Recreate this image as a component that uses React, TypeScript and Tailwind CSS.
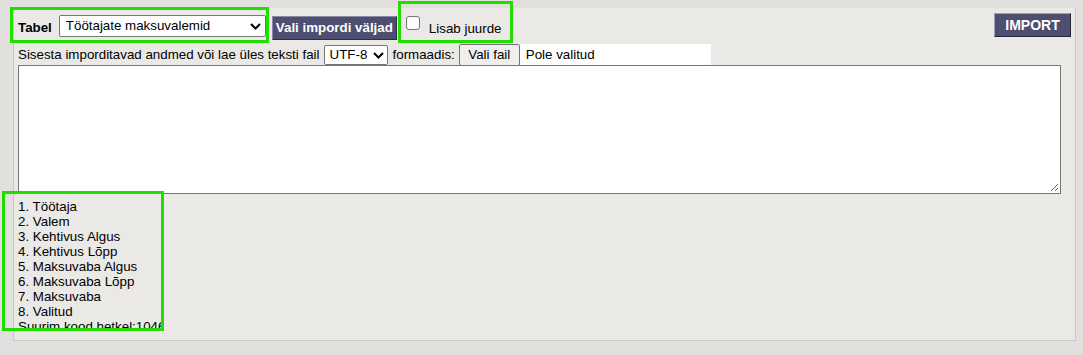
import React from 'react';

const fields = [
  '1. Töötaja',
  '2. Valem',
  '3. Kehtivus Algus',
  '4. Kehtivus Lõpp',
  '5. Maksuvaba Algus',
  '6. Maksuvaba Lõpp',
  '7. Maksuvaba',
  '8. Valitud',
  'Suurim kood hetkel:1046',
];

const Chevron: React.FC = () => (
  <svg className="w-[11px] h-[7px]" viewBox="0 0 11 7" fill="none" stroke="#000" strokeWidth={2}>
    <path d="M1 1l4.5 4.5L10 1" />
  </svg>
);

const App: React.FC = () => {
  return (
    <div className="relative w-[1083px] h-[355px] bg-[#e1e0de] font-['Liberation_Sans',Arial,sans-serif] text-[13.33px] text-black overflow-hidden">
      {/* Main panel */}
      <div className="absolute left-[13px] top-[8px] w-[1063px] h-[333px] bg-[#ebe9e6] border-l border-r border-b border-[#c9c8c6] pl-[4px]">
        {/* Top row */}
        <div className="flex items-start h-[36px]">
          <span className="font-bold mt-[12px] mr-[7px] leading-[15px]">Tabel</span>
          <div className="mt-[7px] flex items-center justify-between w-[207px] h-[22px] bg-white border border-[#767676] rounded-[2px] pl-[6px] pr-[4px]">
            <span>Töötajate maksuvalemid</span>
            <Chevron />
          </div>
          <button className="mt-[8px] ml-[6px] h-[24px] px-[3px] whitespace-nowrap bg-[#4e4e71] text-white font-bold border border-t-[#8a8aa6] border-l-[#8a8aa6] border-r-[#2c2c44] border-b-[#2c2c44]">
            Vali impordi väljad
          </button>
          <div className="ml-[9px] flex items-start">
            <span className="mt-[8px] w-[14px] h-[14px] bg-white border border-[#767676] rounded-[3px]" />
            <span className="ml-[9px] mt-[13px] leading-[15px]">Lisab juurde</span>
          </div>
          <div className="flex-1" />
          <button className="mt-[5px] mr-[4px] w-[77px] h-[24px] bg-[#4e4e71] text-white font-bold text-[14px] border border-t-[#a0a0bc] border-l-[#a0a0bc] border-r-[#26263a] border-b-[#26263a]">
            IMPORT
          </button>
        </div>

        {/* Second row */}
        <div className="flex items-start h-[21px]">
          <span className="mt-[3px] leading-[15px]">Sisesta imporditavad andmed või lae üles teksti fail</span>
          <div className="mt-[1px] ml-[4px] flex items-center justify-between w-[64px] h-[20px] bg-white border border-[#767676] rounded-[2px] pl-[5px] pr-[3px]">
            <span>UTF-8</span>
            <Chevron />
          </div>
          <span className="mt-[3px] ml-[5px] leading-[15px]">formaadis:</span>
          <div className="ml-[4px] flex items-start w-[252px] h-[21px] bg-white">
            <button className="h-[22px] w-[61px] bg-[#efefef] border border-[#767676] rounded-[2px]">Vali fail</button>
            <span className="ml-[6px] mt-[3px] leading-[15px]">Pole valitud</span>
          </div>
        </div>

        {/* Textarea */}
        <div className="relative w-[1043px] h-[129px] bg-white border border-[#767676]">
          <svg className="absolute right-[1px] bottom-[1px] w-[9px] h-[9px]" viewBox="0 0 9 9" stroke="#666" strokeWidth={1}>
            <path d="M8 1L1 8M8 5L5 8" />
          </svg>
        </div>

        {/* Field list */}
        <div className="mt-[5px] w-[146px] h-[129px] overflow-hidden leading-[15px]">
          {fields.map((f) => (
            <div key={f} className="whitespace-nowrap">{f}</div>
          ))}
        </div>
      </div>

      {/* Annotation highlights */}
      <div className="absolute left-[10px] top-[7px] w-[259px] h-[36px] border-[3px] border-[#22dd00]" />
      <div className="absolute left-[398px] top-[1px] w-[115px] h-[42px] border-[3px] border-[#22dd00]" />
      <div className="absolute left-[2px] top-[191px] w-[162px] h-[140px] border-[3px] border-[#22dd00]" />
    </div>
  );
};

export default App;
